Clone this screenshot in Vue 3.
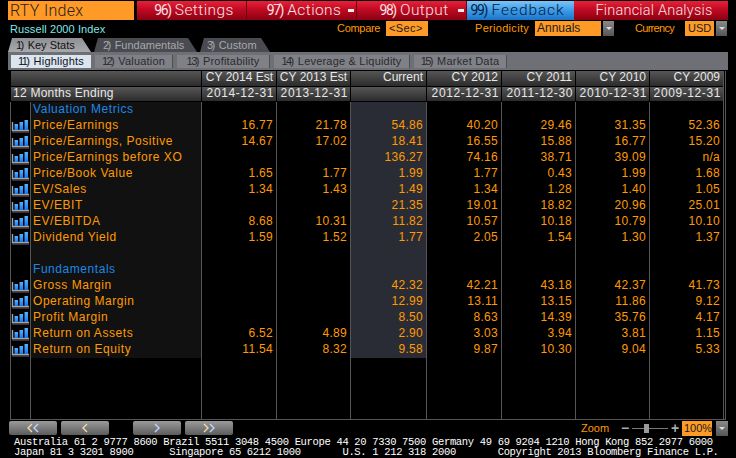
<template>
  <div class="screen">
    <div class="topbar">
      <div class="cmd">RTY Index</div>
      <div class="menu">
        <div class="mbtn"><span class="num">96)</span> Settings</div>
        <div class="mbtn"><span class="num">97)</span> Actions<i class="arrow"></i></div>
        <div class="mbtn"><span class="num">98)</span> Output<i class="arrow"></i></div>
        <div class="mbtn blue"><span class="num">99)</span> Feedback</div>
        <div class="mtitle">Financial Analysis</div>
      </div>
    </div>

    <div class="opts">
      <div class="idx">Russell 2000 Index</div>
      <span class="lbl l1">Compare</span>
      <div class="field f1">&lt;Sec&gt;</div>
      <span class="lbl l2">Periodicity</span>
      <div class="field f2">Annuals</div>
      <div class="drop"><i></i></div>
      <span class="lbl l3">Currency</span>
      <div class="field f3">USD</div>
      <div class="drop"><i></i></div>
    </div>

    <div class="tabs">
      <div class="tab on"><span class="n">1)</span> Key Stats</div>
      <div class="tab t2"><span class="n">2)</span> Fundamentals</div>
      <div class="tab t3"><span class="n">3)</span> Custom</div>
    </div>

    <div class="subbar">
      <div class="sub on s1"><span class="n">11)</span> Highlights</div>
      <div class="sub s2"><span class="n">12)</span> Valuation</div>
      <div class="sub s3"><span class="n">13)</span> Profitability</div>
      <div class="sub s4"><span class="n">14)</span> Leverage &amp; Liquidity</div>
      <div class="sub s3"><span class="n">15)</span> Market Data</div>
    </div>

    <div class="table">
      <div class="row head">
        <div class="hc wide"></div>
        <div class="hc" v-for="h in heads" :key="h">{{ h }}</div>
        <div class="end"></div>
      </div>
      <div class="row head">
        <div class="hc wide left">12 Months Ending</div>
        <div class="hc date" v-for="d in dates" :key="d">{{ d }}</div>
        <div class="end"></div>
      </div>
      <div class="row" v-for="(r, i) in rows" :key="i">
        <div class="c ic">
          <svg v-if="r.vals" width="19" height="14" viewBox="0 0 19 14">
            <defs>
              <linearGradient id="bar" x1="0" y1="0" x2="0" y2="1">
                <stop offset="0" stop-color="#55b0ff"/>
                <stop offset="1" stop-color="#1a78ec"/>
              </linearGradient>
            </defs>
            <path d="M1.5 3v8.5H18" fill="none" stroke="#a4a4a4" stroke-width="1.4"/>
            <path d="M1 13h17" stroke="#666" stroke-width="1"/>
            <rect x="3.5" y="5" width="3.5" height="6" fill="url(#bar)"/>
            <rect x="8.5" y="3" width="3.5" height="8" fill="url(#bar)"/>
            <rect x="13.5" y="1" width="3.5" height="10" fill="url(#bar)"/>
          </svg>
        </div>
        <div class="c name" :class="{ sect: r.sect }">{{ r.name }}</div>
        <div class="c val" :class="{ cur: j === 2 }" v-for="(v, j) in cells(r)" :key="j">{{ v }}</div>
        <div class="end"></div>
      </div>
      <div class="row filler">
        <div class="c ic"></div>
        <div class="c blank"></div>
        <div class="c" v-for="n in 7" :key="n"></div>
        <div class="end"></div>
      </div>
    </div>

    <div class="navline">
      <button class="nav">
        <svg width="16" height="10" viewBox="0 0 16 10"><path d="M7 1 3 5l4 4" class="warm"/><path d="M13 1 9 5l4 4" class="cool"/></svg>
      </button>
      <button class="nav">
        <svg width="8" height="10" viewBox="0 0 8 10"><path d="M6 1 2 5l4 4" class="warm"/></svg>
      </button>
      <button class="nav gap">
        <svg width="8" height="10" viewBox="0 0 8 10"><path d="M2 1l4 4-4 4" class="cool"/></svg>
      </button>
      <button class="nav">
        <svg width="16" height="10" viewBox="0 0 16 10"><path d="M3 1l4 4-4 4" class="warm"/><path d="M9 1l4 4-4 4" class="cool"/></svg>
      </button>
      <span class="zoomlbl">Zoom</span>
      <span class="pm">&minus;</span>
      <div class="slider"><i></i></div>
      <span class="pm">+</span>
      <div class="field pct">100%</div>
      <div class="drop"><i></i></div>
    </div>

    <div class="foot">
      <div v-for="l in footer" :key="l">{{ l }}</div>
    </div>
  </div>
</template>

<script setup>
const heads = ['CY 2014 Est', 'CY 2013 Est', 'Current', 'CY 2012', 'CY 2011', 'CY 2010', 'CY 2009']
const dates = ['2014-12-31', '2013-12-31', '', '2012-12-31', '2011-12-30', '2010-12-31', '2009-12-31']

const rows = [
  { name: 'Valuation Metrics', sect: true },
  { name: 'Price/Earnings', vals: ['16.77', '21.78', '54.86', '40.20', '29.46', '31.35', '52.36'] },
  { name: 'Price/Earnings, Positive', vals: ['14.67', '17.02', '18.41', '16.55', '15.88', '16.77', '15.20'] },
  { name: 'Price/Earnings before XO', vals: ['', '', '136.27', '74.16', '38.71', '39.09', 'n/a'] },
  { name: 'Price/Book Value', vals: ['1.65', '1.77', '1.99', '1.77', '0.43', '1.99', '1.68'] },
  { name: 'EV/Sales', vals: ['1.34', '1.43', '1.49', '1.34', '1.28', '1.40', '1.05'] },
  { name: 'EV/EBIT', vals: ['', '', '21.35', '19.01', '18.82', '20.96', '25.01'] },
  { name: 'EV/EBITDA', vals: ['8.68', '10.31', '11.82', '10.57', '10.18', '10.79', '10.10'] },
  { name: 'Dividend Yield', vals: ['1.59', '1.52', '1.77', '2.05', '1.54', '1.30', '1.37'] },
  { name: '' },
  { name: 'Fundamentals', sect: true },
  { name: 'Gross Margin', vals: ['', '', '42.32', '42.21', '43.18', '42.37', '41.73'] },
  { name: 'Operating Margin', vals: ['', '', '12.99', '13.11', '13.15', '11.86', '9.12'] },
  { name: 'Profit Margin', vals: ['', '', '8.50', '8.63', '14.39', '35.76', '4.17'] },
  { name: 'Return on Assets', vals: ['6.52', '4.89', '2.90', '3.03', '3.94', '3.81', '1.15'] },
  { name: 'Return on Equity', vals: ['11.54', '8.32', '9.58', '9.87', '10.30', '9.04', '5.33'] }
]

const cells = (r) => r.vals || ['', '', '', '', '', '', '']

const footer = [
  'Australia 61 2 9777 8600 Brazil 5511 3048 4500 Europe 44 20 7330 7500 Germany 49 69 9204 1210 Hong Kong 852 2977 6000',
  'Japan 81 3 3201 8900      Singapore 65 6212 1000       U.S. 1 212 318 2000       Copyright 2013 Bloomberg Finance L.P.'
]
</script>

<style>
html, body { margin: 0; background: #000; }
</style>

<style scoped>
.screen {
  width: 736px;
  height: 458px;
  background: #000;
  display: flex;
  flex-direction: column;
  overflow: hidden;
  font-family: "Liberation Sans", sans-serif;
  font-size: 11px;
  color: #ff9a00;
}

/* top bar */
.topbar {
  display: flex;
  height: 19px;
  padding: 1px 8px 0 8px;
  gap: 3px;
}
.cmd {
  width: 126px;
  background: #ff9a26;
  color: #2a2118;
  font-family: Roboto, sans-serif;
  font-weight: 300;
  font-size: 16px;
  letter-spacing: 0.3px;
  line-height: 19px;
  padding-left: 2px;
  box-sizing: border-box;
}
.menu {
  flex: 1;
  display: flex;
  background: linear-gradient(#e8203a, #c00a22 45%, #8c0012);
  font-family: Roboto, sans-serif;
  font-weight: 300;
  font-size: 15.5px;
  letter-spacing: 0.4px;
  color: #f6e4e4;
}
.mbtn {
  width: 110px;
  box-sizing: border-box;
  border-right: 1px solid #6e0410;
  text-align: center;
  line-height: 19px;
  position: relative;
  padding-left: 5px;
}
.num { font-size: 14px; letter-spacing: -1.4px; font-weight: 400; }
.arrow {
  position: absolute;
  right: 2px;
  top: 8px;
  width: 6px;
  height: 3px;
  background: #eee;
}
.mbtn.blue {
  width: 107px;
  padding-left: 0;
  padding-right: 6px;
  letter-spacing: 0.9px;
  color: #05203f;
  background: linear-gradient(#7cc4f6, #3b9be8 50%, #1c74c8);
  border-right: 0;
}
.mtitle {
  flex: 1;
  text-align: center;
  line-height: 20px;
  padding-left: 6px;
  font-size: 14.5px;
  letter-spacing: 0.2px;
}

/* options line */
.opts {
  display: flex;
  align-items: flex-start;
  height: 17px;
  padding-top: 1px;
  box-sizing: border-box;
  margin-left: 10px;
  line-height: 15px;
  white-space: nowrap;
}
.idx { width: 327px; color: #7fe8e8; line-height: 16px; letter-spacing: 0.1px; }
.lbl { line-height: 15px; }
.l1 { width: 49px; letter-spacing: -0.3px; }
.l2 { margin-left: 47px; width: 60px; letter-spacing: 0.3px; }
.l3 { margin-left: 21px; width: 50px; letter-spacing: -0.7px; }
.field {
  background: #ff9a26;
  color: #1a1a1a;
  height: 15px;
  padding-left: 3px;
  box-sizing: border-box;
}
.f1 { width: 42px; letter-spacing: 0.4px; }
.f2 { width: 66px; font-size: 12px; padding-left: 2px; }
.f3 { width: 29px; }
.drop {
  width: 11px;
  height: 15px;
  margin-left: 2px;
  background: linear-gradient(#8a8a8a, #555);
  display: flex;
  align-items: center;
  justify-content: center;
}
.drop i {
  width: 0;
  height: 0;
  border: 3px solid transparent;
  border-top: 3px solid #ddd;
  border-bottom: 0;
}

/* tabs */
.tabs {
  display: flex;
  height: 14px;
  margin: 1px 0 0 8px;
  gap: 3px;
  color: #a8a8ac;
  line-height: 14px;
}
.tab {
  padding-left: 9px;
  box-sizing: border-box;
  background: #4a4b50;
  white-space: nowrap;
  clip-path: polygon(4px 0, calc(100% - 9px) 0, 100% 100%, 0 100%);
}
.tab.on { width: 83px; background: linear-gradient(#8f9094, #a8a9ad); color: #111; padding-left: 8px; }
.tab.t2 { width: 103px; }
.tab.t3 { width: 70px; padding-left: 7px; }
.n { letter-spacing: -1.6px; margin-right: 2px; }

.subbar {
  display: flex;
  gap: 4px;
  height: 18px;
  margin: 0 8px;
  padding: 3px 0 0 3px;
  box-sizing: border-box;
  background: #6f7076;
  color: #2a2a30;
  letter-spacing: 0.2px;
}
.sub {
  height: 13px;
  line-height: 13px;
  text-align: center;
  background: #808187;
  border-right: 1px solid #4d4e52;
  box-sizing: border-box;
  white-space: nowrap;
}
.s1 { width: 80px; }
.s2 { width: 78px; }
.s3 { width: 93px; }
.s4 { width: 136px; }
.sub.on { background: #dbe5f0; color: #11131a; border-right: 0; }

/* table */
.table {
  flex: 1;
  display: flex;
  flex-direction: column;
  margin: 1px 0 0 10px;
  border-bottom: 1px solid #555;
  width: 716px;
  min-height: 0;
  font-size: 12px;
}
.row {
  display: grid;
  grid-template-columns: 20px 171px 75px 74px 76px 75px 74px 74px 74px 3px;
  height: 16px;
  line-height: 14px;
}
.row.head { height: 15.5px; }
.wide { grid-column: span 2; }
.hc {
  background: linear-gradient(#565656, #2c2c2c);
  color: #e8e8e8;
  text-align: right;
  padding-right: 3px;
  border-left: 1px solid #000;
  border-bottom: 1px solid #000;
  box-sizing: border-box;
  line-height: 12px;
  white-space: nowrap;
}
.hc.date { letter-spacing: 0.6px; padding-right: 2px; }
.hc.left { text-align: left; padding-left: 2px; letter-spacing: 0.25px; }
.c {
  border-left: 1px solid #555;
  box-sizing: border-box;
  min-width: 0;
}
.ic { display: flex; align-items: center; }
.name {
  background: #111;
  padding-left: 2px;
  white-space: nowrap;
  letter-spacing: 0.55px;
}
.name.sect { color: #1d88e5; }
.blank { background: transparent; }
.val {
  text-align: right;
  padding-right: 3px;
  letter-spacing: 0.3px;
}
.val.cur { background: #2a2c35; }
.end { border-left: 1px solid #555; border-right: 1px solid #555; }
.filler { flex: 1; }

/* nav */
.navline {
  display: flex;
  align-items: flex-start;
  height: 17px;
  padding: 1px 0 0 9px;
  box-sizing: border-box;
}
.nav {
  width: 48px;
  height: 14px;
  margin-right: 4px;
  padding: 0;
  border: 0;
  border-radius: 2px;
  background: linear-gradient(#9a9a9a, #5c5c5c);
  display: flex;
  align-items: center;
  justify-content: center;
}
.nav svg { fill: none; stroke-width: 1.4; }
.warm { stroke: #f0d8b0; }
.cool { stroke: #c0d4ff; }
.nav.gap { margin-left: 20px; }
.zoomlbl { margin-left: 344px; width: 39px; line-height: 15px; }
.pm { color: #aaa; width: 10px; text-align: center; font-size: 14px; line-height: 15px; font-weight: bold; }
.slider {
  width: 36px;
  height: 15px;
  margin: 0 2px;
  position: relative;
  background: linear-gradient(#777, #777) center / 100% 1px no-repeat;
}
.slider i {
  position: absolute;
  left: 12px;
  top: 3px;
  width: 5px;
  height: 9px;
  background: #9a9a9a;
}
.field.pct {
  margin-left: 2px;
  width: 30px;
  height: 15px;
  line-height: 15px;
  padding-left: 2px;
}
.navline .drop { margin-left: 4px; width: 12px; }

/* footer */
.foot {
  flex: none;
  height: 21px;
  padding-left: 14px;
  color: #fff;
  white-space: pre;
  font-family: "Liberation Mono", monospace;
  font-size: 10.5px;
  line-height: 10px;
  letter-spacing: -0.33px;
}
</style>
